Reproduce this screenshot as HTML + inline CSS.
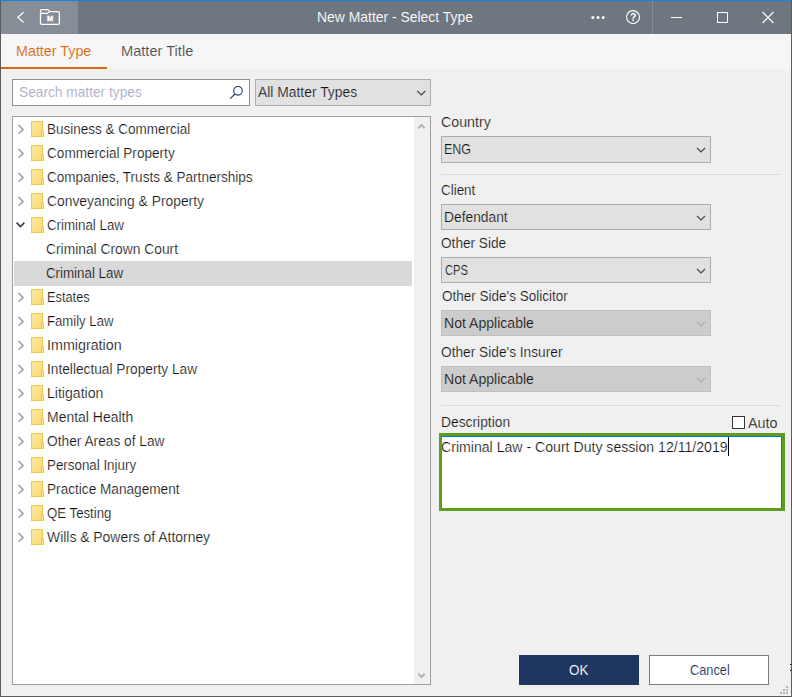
<!DOCTYPE html>
<html lang="en"><head><meta charset="utf-8"><title>New Matter - Select Type</title>
<style>
html,body{margin:0;padding:0;background:#f0f0f0;}
body{width:792px;height:697px;overflow:hidden;font-family:"Liberation Sans",sans-serif;}
#win{position:relative;width:792px;height:697px;background:#f0f0f0;overflow:hidden;}
#win div,#win span,#win svg{position:absolute;box-sizing:border-box;}
.t{transform-origin:0 0;line-height:20px;white-space:nowrap;height:20px;}
#bt{left:0;top:0;width:792px;height:1px;background:#1883d7;}
#bl{left:0;top:1px;width:1px;height:696px;background:#5c5c5c;}
#br{left:791px;top:1px;width:1px;height:696px;background:#5c5c5c;}
#bb{left:0;top:696px;width:792px;height:1px;background:#5c5c5c;}
#title{left:1px;top:1px;width:790px;height:33px;background:#6e7680;}
#tlight{left:1px;top:1px;width:77px;height:33px;background:#868d96;}
#tdiv{left:652px;top:1px;width:1px;height:33px;background:#868d96;}
#tabs{left:1px;top:34px;width:790px;height:35px;background:#f6f6f6;}
#tabul{left:1px;top:67px;width:106px;height:2px;background:#d86a0b;}
#search{left:12px;top:79px;width:238px;height:27px;background:#fff;border:1px solid #8f8f8f;}
.combo{background:#e1e1e1;border:1px solid #adadad;height:27px;}
.combo.dis{background:#cccccc;border-color:#bfbfbf;}
#cmt{left:255px;top:79px;width:176px;}
.rc{left:441px;width:270px;}
#tree{left:12px;top:116px;width:419px;height:569px;background:#fff;border:1px solid #9d9da6;}
#sb{left:414px;top:117px;width:16px;height:567px;background:#f0f0f0;}
#sel{left:14px;top:261px;width:398px;height:25px;background:#d9d9d9;}
.sep{left:441px;width:340px;height:1px;background:#dcdcdc;}
#ta{left:439px;top:433px;width:346px;height:78px;background:#fff;border:3px solid #5d9e1f;}
#tab1{left:442px;top:436px;width:340px;height:1px;background:#0078d7;}
#tab2{left:781px;top:436px;width:1px;height:72px;background:#0078d7;}
#caret{left:728px;top:437px;width:1px;height:19px;background:#000;}
#chk{left:732px;top:416px;width:13px;height:13px;background:#fff;border:1px solid #333;}
#ok{left:519px;top:655px;width:120px;height:30px;background:#1f3660;}
#cancel{left:649px;top:655px;width:120px;height:30px;background:#fff;border:1px solid #7a7a7a;}
.grip{width:2px;height:2px;background:#b4b4b4;}

</style></head><body>
<div id="win">
<div id="bt"></div><div id="bl"></div><div id="br"></div><div id="bb"></div>
<div id="title"></div><div id="tlight"></div><div id="tdiv"></div>
<div id="tabs"></div><div id="tabul"></div>
<div id="search"></div>
<div id="cmt" class="combo"></div>
<div id="tree"></div><div id="sb"></div><div id="sel"></div>
<div class="combo rc" style="top:136px"></div>
<div class="sep" style="top:174px"></div>
<div class="combo rc" style="top:204px;height:26px"></div>
<div class="combo rc" style="top:257px;height:26px"></div>
<div class="combo rc dis" style="top:310px;height:26px"></div>
<div class="combo rc dis" style="top:366px;height:26px"></div>
<div class="sep" style="top:405px"></div>
<div id="chk"></div>
<div id="ta"></div><div id="tab1"></div><div id="tab2"></div><div id="caret"></div>
<div style="left:790px;top:664px;width:2px;height:1px;background:#333"></div><div style="left:790px;top:670px;width:2px;height:1px;background:#333"></div>
<div id="ok"></div><div id="cancel"></div>
<div class="grip" style="left:786px;top:686px"></div>
<div class="grip" style="left:783px;top:689px"></div><div class="grip" style="left:786px;top:689px"></div>
<div class="grip" style="left:780px;top:692px"></div><div class="grip" style="left:783px;top:692px"></div><div class="grip" style="left:786px;top:692px"></div>
<svg id="icons" style="left:0;top:0" width="792" height="697" viewBox="0 0 792 697" fill="none">
<!-- back chevron -->
<path d="M23.6 12.2 L17.8 17.3 L23.6 22.5" stroke="#fff" stroke-width="1.2"/>
<!-- folder M -->
<path d="M41.6 9.6 H47.4 Q48 9.6 48.5 10.1 L50 11.6 H58 Q59.4 11.6 59.4 13 V22.9 Q59.4 24.3 58 24.3 H41.9 Q40.5 24.3 40.5 22.9 V10.7 Q40.5 9.6 41.6 9.6 Z" stroke="#fff" stroke-width="1.3"/>
<path d="M40.5 13.4 H46.8 Q47.4 13.4 47.9 13 L49.8 11.6" stroke="#fff" stroke-width="1.2"/>
<text x="50" y="20.9" font-family="Liberation Sans, sans-serif" font-weight="bold" font-size="7.4" fill="#fff" stroke="#fff" stroke-width="0.35" text-anchor="middle">M</text>
<!-- dots -->
<circle cx="592.8" cy="17.4" r="1.5" fill="#fff"/><circle cx="598" cy="17.4" r="1.5" fill="#fff"/><circle cx="603.2" cy="17.4" r="1.5" fill="#fff"/>
<!-- help -->
<circle cx="633" cy="17.1" r="6.5" stroke="#fff" stroke-width="1.1"/>
<text x="633.2" y="21.3" font-family="Liberation Sans, sans-serif" font-weight="bold" font-size="10.5" fill="#fff" text-anchor="middle">?</text>
<!-- min max close -->
<path d="M671 17.5 H682" stroke="#fff" stroke-width="1"/>
<rect x="717.5" y="12.5" width="10" height="10" stroke="#fff" stroke-width="1"/>
<path d="M762.5 12 L773.5 23 M773.5 12 L762.5 23" stroke="#fff" stroke-width="1.1"/>
<!-- magnifier -->
<circle cx="238" cy="90.8" r="4.3" stroke="#1f3864" stroke-width="1.1"/>
<path d="M235 94 L230.2 98.6" stroke="#1f3864" stroke-width="1.2"/>
<defs><linearGradient id="fg" x1="0" y1="0" x2="1" y2="1"><stop offset="0" stop-color="#fdeaa6"/><stop offset="1" stop-color="#fad96c"/></linearGradient></defs>
<path d="M18.6 125.1 L23 129.4 L18.6 133.7" stroke="#a6a6a6" stroke-width="1.6"/>
<rect x="31.5" y="121.5" width="11" height="15" fill="url(#fg)" stroke="#f2cb4d" stroke-width="1"/>
<rect x="41.5" y="130.5" width="2" height="6" fill="#fbdf80" stroke="#f2cb4d" stroke-width="1"/>
<path d="M18.6 149.1 L23 153.4 L18.6 157.7" stroke="#a6a6a6" stroke-width="1.6"/>
<rect x="31.5" y="145.5" width="11" height="15" fill="url(#fg)" stroke="#f2cb4d" stroke-width="1"/>
<rect x="41.5" y="154.5" width="2" height="6" fill="#fbdf80" stroke="#f2cb4d" stroke-width="1"/>
<path d="M18.6 173.1 L23 177.4 L18.6 181.7" stroke="#a6a6a6" stroke-width="1.6"/>
<rect x="31.5" y="169.5" width="11" height="15" fill="url(#fg)" stroke="#f2cb4d" stroke-width="1"/>
<rect x="41.5" y="178.5" width="2" height="6" fill="#fbdf80" stroke="#f2cb4d" stroke-width="1"/>
<path d="M18.6 197.1 L23 201.4 L18.6 205.7" stroke="#a6a6a6" stroke-width="1.6"/>
<rect x="31.5" y="193.5" width="11" height="15" fill="url(#fg)" stroke="#f2cb4d" stroke-width="1"/>
<rect x="41.5" y="202.5" width="2" height="6" fill="#fbdf80" stroke="#f2cb4d" stroke-width="1"/>
<path d="M16.6 222.6 L20.5 226.6 L24.4 222.6" stroke="#3c3c3c" stroke-width="1.6"/>
<rect x="31.5" y="217.5" width="11" height="15" fill="url(#fg)" stroke="#f2cb4d" stroke-width="1"/>
<rect x="41.5" y="226.5" width="2" height="6" fill="#fbdf80" stroke="#f2cb4d" stroke-width="1"/>
<path d="M18.6 293.1 L23 297.4 L18.6 301.7" stroke="#a6a6a6" stroke-width="1.6"/>
<rect x="31.5" y="289.5" width="11" height="15" fill="url(#fg)" stroke="#f2cb4d" stroke-width="1"/>
<rect x="41.5" y="298.5" width="2" height="6" fill="#fbdf80" stroke="#f2cb4d" stroke-width="1"/>
<path d="M18.6 317.1 L23 321.4 L18.6 325.7" stroke="#a6a6a6" stroke-width="1.6"/>
<rect x="31.5" y="313.5" width="11" height="15" fill="url(#fg)" stroke="#f2cb4d" stroke-width="1"/>
<rect x="41.5" y="322.5" width="2" height="6" fill="#fbdf80" stroke="#f2cb4d" stroke-width="1"/>
<path d="M18.6 341.1 L23 345.4 L18.6 349.7" stroke="#a6a6a6" stroke-width="1.6"/>
<rect x="31.5" y="337.5" width="11" height="15" fill="url(#fg)" stroke="#f2cb4d" stroke-width="1"/>
<rect x="41.5" y="346.5" width="2" height="6" fill="#fbdf80" stroke="#f2cb4d" stroke-width="1"/>
<path d="M18.6 365.1 L23 369.4 L18.6 373.7" stroke="#a6a6a6" stroke-width="1.6"/>
<rect x="31.5" y="361.5" width="11" height="15" fill="url(#fg)" stroke="#f2cb4d" stroke-width="1"/>
<rect x="41.5" y="370.5" width="2" height="6" fill="#fbdf80" stroke="#f2cb4d" stroke-width="1"/>
<path d="M18.6 389.1 L23 393.4 L18.6 397.7" stroke="#a6a6a6" stroke-width="1.6"/>
<rect x="31.5" y="385.5" width="11" height="15" fill="url(#fg)" stroke="#f2cb4d" stroke-width="1"/>
<rect x="41.5" y="394.5" width="2" height="6" fill="#fbdf80" stroke="#f2cb4d" stroke-width="1"/>
<path d="M18.6 413.1 L23 417.4 L18.6 421.7" stroke="#a6a6a6" stroke-width="1.6"/>
<rect x="31.5" y="409.5" width="11" height="15" fill="url(#fg)" stroke="#f2cb4d" stroke-width="1"/>
<rect x="41.5" y="418.5" width="2" height="6" fill="#fbdf80" stroke="#f2cb4d" stroke-width="1"/>
<path d="M18.6 437.1 L23 441.4 L18.6 445.7" stroke="#a6a6a6" stroke-width="1.6"/>
<rect x="31.5" y="433.5" width="11" height="15" fill="url(#fg)" stroke="#f2cb4d" stroke-width="1"/>
<rect x="41.5" y="442.5" width="2" height="6" fill="#fbdf80" stroke="#f2cb4d" stroke-width="1"/>
<path d="M18.6 461.1 L23 465.4 L18.6 469.7" stroke="#a6a6a6" stroke-width="1.6"/>
<rect x="31.5" y="457.5" width="11" height="15" fill="url(#fg)" stroke="#f2cb4d" stroke-width="1"/>
<rect x="41.5" y="466.5" width="2" height="6" fill="#fbdf80" stroke="#f2cb4d" stroke-width="1"/>
<path d="M18.6 485.1 L23 489.4 L18.6 493.7" stroke="#a6a6a6" stroke-width="1.6"/>
<rect x="31.5" y="481.5" width="11" height="15" fill="url(#fg)" stroke="#f2cb4d" stroke-width="1"/>
<rect x="41.5" y="490.5" width="2" height="6" fill="#fbdf80" stroke="#f2cb4d" stroke-width="1"/>
<path d="M18.6 509.1 L23 513.4 L18.6 517.7" stroke="#a6a6a6" stroke-width="1.6"/>
<rect x="31.5" y="505.5" width="11" height="15" fill="url(#fg)" stroke="#f2cb4d" stroke-width="1"/>
<rect x="41.5" y="514.5" width="2" height="6" fill="#fbdf80" stroke="#f2cb4d" stroke-width="1"/>
<path d="M18.6 533.1 L23 537.4 L18.6 541.7" stroke="#a6a6a6" stroke-width="1.6"/>
<rect x="31.5" y="529.5" width="11" height="15" fill="url(#fg)" stroke="#f2cb4d" stroke-width="1"/>
<rect x="41.5" y="538.5" width="2" height="6" fill="#fbdf80" stroke="#f2cb4d" stroke-width="1"/>
<path d="M417.3 91 L421.3 95 L425.3 91" stroke="#444" stroke-width="1.1"/>
<path d="M697 148 L701 152 L705 148" stroke="#444" stroke-width="1.1"/>
<path d="M697 216 L701 220 L705 216" stroke="#444" stroke-width="1.1"/>
<path d="M697 269 L701 273 L705 269" stroke="#444" stroke-width="1.1"/>
<path d="M697 322 L701 326 L705 322" stroke="#a9a9a9" stroke-width="1.1"/>
<path d="M697 378 L701 382 L705 378" stroke="#a9a9a9" stroke-width="1.1"/>
<path d="M418.3 128.3 L421.5 125 L424.7 128.3" stroke="#b2b2b2" stroke-width="2"/>
<path d="M418.3 673.7 L421.5 677 L424.7 673.7" stroke="#b2b2b2" stroke-width="2"/>
</svg>

<span class="t" id="t0" style="left:317.21px;top:7px;font-size:14px;color:#ffffff;-webkit-text-stroke:0.1px #6e7680;transform:scaleX(0.9936);">New Matter - Select Type</span>
<span class="t" id="t1" style="left:16.18px;top:41px;font-size:14px;color:#d86a0b;-webkit-text-stroke:0.1px #f6f6f6;transform:scaleX(1.0222);">Matter Type</span>
<span class="t" id="t2" style="left:121.46px;top:41px;font-size:14px;color:#505050;-webkit-text-stroke:0.1px #f6f6f6;transform:scaleX(1.0441);">Matter Title</span>
<span class="t" id="t3" style="left:18.52px;top:82px;font-size:14px;color:#adadc8;-webkit-text-stroke:0.1px #ffffff;transform:scaleX(0.9798);">Search matter types</span>
<span class="t" id="t4" style="left:258.00px;top:82px;font-size:14px;color:#101010;-webkit-text-stroke:0.2px #e1e1e1;transform:scaleX(0.9900);">All Matter Types</span>
<span class="t" id="t5" style="left:47.04px;top:119px;font-size:14px;color:#101010;-webkit-text-stroke:0.2px #ffffff;transform:scaleX(0.9633);">Business &amp; Commercial</span>
<span class="t" id="t6" style="left:47.40px;top:143px;font-size:14px;color:#101010;-webkit-text-stroke:0.2px #ffffff;transform:scaleX(0.9712);">Commercial Property</span>
<span class="t" id="t7" style="left:47.40px;top:167px;font-size:14px;color:#101010;-webkit-text-stroke:0.2px #ffffff;transform:scaleX(0.9679);">Companies, Trusts &amp; Partnerships</span>
<span class="t" id="t8" style="left:47.40px;top:191px;font-size:14px;color:#101010;-webkit-text-stroke:0.2px #ffffff;transform:scaleX(0.9887);">Conveyancing &amp; Property</span>
<span class="t" id="t9" style="left:47.40px;top:215px;font-size:14px;color:#101010;-webkit-text-stroke:0.2px #ffffff;transform:scaleX(0.9506);">Criminal Law</span>
<span class="t" id="t10" style="left:46.30px;top:239px;font-size:14px;color:#101010;-webkit-text-stroke:0.2px #ffffff;transform:scaleX(0.9866);">Criminal Crown Court</span>
<span class="t" id="t11" style="left:46.30px;top:263px;font-size:14px;color:#101010;-webkit-text-stroke:0.2px #d9d9d9;transform:scaleX(0.9519);">Criminal Law</span>
<span class="t" id="t12" style="left:47.09px;top:287px;font-size:14px;color:#101010;-webkit-text-stroke:0.2px #ffffff;transform:scaleX(0.9130);">Estates</span>
<span class="t" id="t13" style="left:47.06px;top:311px;font-size:14px;color:#101010;-webkit-text-stroke:0.2px #ffffff;transform:scaleX(0.9386);">Family Law</span>
<span class="t" id="t14" style="left:46.98px;top:335px;font-size:14px;color:#101010;-webkit-text-stroke:0.2px #ffffff;transform:scaleX(1.0208);">Immigration</span>
<span class="t" id="t15" style="left:47.02px;top:359px;font-size:14px;color:#101010;-webkit-text-stroke:0.2px #ffffff;transform:scaleX(0.9791);">Intellectual Property Law</span>
<span class="t" id="t16" style="left:46.99px;top:383px;font-size:14px;color:#101010;-webkit-text-stroke:0.2px #ffffff;transform:scaleX(1.0055);">Litigation</span>
<span class="t" id="t17" style="left:47.20px;top:407px;font-size:14px;color:#101010;-webkit-text-stroke:0.2px #ffffff;transform:scaleX(0.9988);">Mental Health</span>
<span class="t" id="t18" style="left:47.30px;top:431px;font-size:14px;color:#101010;-webkit-text-stroke:0.2px #ffffff;transform:scaleX(0.9808);">Other Areas of Law</span>
<span class="t" id="t19" style="left:47.05px;top:455px;font-size:14px;color:#101010;-webkit-text-stroke:0.2px #ffffff;transform:scaleX(0.9538);">Personal Injury</span>
<span class="t" id="t20" style="left:47.03px;top:479px;font-size:14px;color:#101010;-webkit-text-stroke:0.2px #ffffff;transform:scaleX(0.9733);">Practice Management</span>
<span class="t" id="t21" style="left:47.30px;top:503px;font-size:14px;color:#101010;-webkit-text-stroke:0.2px #ffffff;transform:scaleX(0.9441);">QE Testing</span>
<span class="t" id="t22" style="left:47.10px;top:527px;font-size:14px;color:#101010;-webkit-text-stroke:0.2px #ffffff;transform:scaleX(0.9933);">Wills &amp; Powers of Attorney</span>
<span class="t" id="t23" style="left:440.90px;top:112px;font-size:14px;color:#101010;-webkit-text-stroke:0.2px #f0f0f0;transform:scaleX(1.0163);">Country</span>
<span class="t" id="t24" style="left:443.71px;top:139px;font-size:14px;color:#101010;-webkit-text-stroke:0.2px #e1e1e1;transform:scaleX(0.8931);">ENG</span>
<span class="t" id="t25" style="left:440.90px;top:180px;font-size:14px;color:#101010;-webkit-text-stroke:0.2px #f0f0f0;transform:scaleX(0.9583);">Client</span>
<span class="t" id="t26" style="left:443.61px;top:207px;font-size:14px;color:#101010;-webkit-text-stroke:0.2px #e1e1e1;transform:scaleX(0.9859);">Defendant</span>
<span class="t" id="t27" style="left:440.80px;top:233px;font-size:14px;color:#101010;-webkit-text-stroke:0.2px #f0f0f0;transform:scaleX(0.9731);">Other Side</span>
<span class="t" id="t28" style="left:444.60px;top:260px;font-size:14px;color:#101010;-webkit-text-stroke:0.2px #e1e1e1;transform:scaleX(0.8000);">CPS</span>
<span class="t" id="t29" style="left:441.80px;top:286px;font-size:14px;color:#101010;-webkit-text-stroke:0.2px #f0f0f0;transform:scaleX(0.9646);">Other Side's Solicitor</span>
<span class="t" id="t30" style="left:443.60px;top:313px;font-size:14px;color:#101010;-webkit-text-stroke:0.2px #cccccc;transform:scaleX(1.0045);">Not Applicable</span>
<span class="t" id="t31" style="left:440.80px;top:342px;font-size:14px;color:#101010;-webkit-text-stroke:0.2px #f0f0f0;transform:scaleX(0.9790);">Other Side's Insurer</span>
<span class="t" id="t32" style="left:443.60px;top:369px;font-size:14px;color:#101010;-webkit-text-stroke:0.2px #cccccc;transform:scaleX(1.0045);">Not Applicable</span>
<span class="t" id="t33" style="left:440.51px;top:412px;font-size:14px;color:#101010;-webkit-text-stroke:0.2px #f0f0f0;transform:scaleX(0.9870);">Description</span>
<span class="t" id="t34" style="left:747.90px;top:413px;font-size:14px;color:#101010;-webkit-text-stroke:0.2px #f0f0f0;transform:scaleX(1.0241);">Auto</span>
<span class="t" id="t35" style="left:440.69px;top:437px;font-size:14px;color:#101010;-webkit-text-stroke:0.2px #ffffff;transform:scaleX(1.0074);">Criminal Law - Court Duty session 12/11/2019</span>
<span class="t" id="t36" style="left:569.20px;top:660px;font-size:14px;color:#ffffff;-webkit-text-stroke:0.1px #1f3660;transform:scaleX(0.9600);">OK</span>
<span class="t" id="t37" style="left:689.70px;top:660px;font-size:14px;color:#1f3864;-webkit-text-stroke:0.1px #ffffff;transform:scaleX(0.9116);">Cancel</span>
</div>
</body></html>
